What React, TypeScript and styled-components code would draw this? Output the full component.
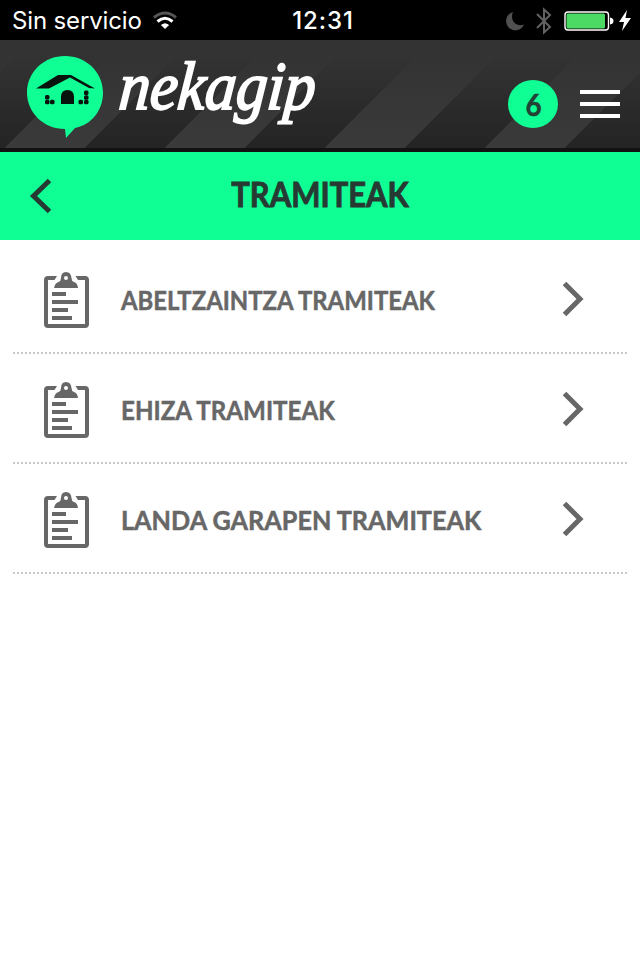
import React from "react";
import styled, { createGlobalStyle } from "styled-components";

const GlobalStyle = createGlobalStyle`
  * { box-sizing: border-box; }
  body { margin: 0; background: #fff; }
`;

const Screen = styled.div`
  width: 640px;
  height: 960px;
  overflow: hidden;
  background: #fff;
  font-family: Lato, "Liberation Sans", sans-serif;
`;

const StatusBar = styled.div`
  display: grid;
  grid-template-columns: 1fr auto 1fr;
  align-items: center;
  height: 40px;
  padding: 1px 9px 0 12px;
  background: #000;
  color: #fff;
  font: 400 24px/39px Inter, "Liberation Sans", sans-serif;
`;

const Carrier = styled.div`
  display: flex;
  align-items: center;
  gap: 10px;
  letter-spacing: -0.15px;
`;

const Clock = styled.div`
  padding-left: 3px;
  font-weight: 500;
  letter-spacing: 0.9px;
`;

const StatusIcons = styled.div`
  display: flex;
  justify-content: flex-end;
  align-items: center;
  gap: 5px;
`;

const Header = styled.header`
  display: flex;
  height: 112px;
  padding-left: 27px;
  border-bottom: 4px solid #121212;
  background:
    linear-gradient(#333 0, #333 14%, rgba(51, 51, 51, 0) 100%),
    repeating-linear-gradient(135deg, #3a3a3a 0 22.6px, #242424 23.1px 79.2px, #3a3a3a 79.7px 113.14px);
`;

const Brand = styled.div`
  display: flex;
  flex: 1;
  padding-top: 16px;
  gap: 15px;
`;

const Wordmark = styled.span`
  font: italic 400 62px/74px "Liberation Serif", serif;
  color: #fff;
  -webkit-text-stroke: 1.8px #fff;
  transform: translateY(-5px) skewX(-5deg) scaleY(1.1);
  transform-origin: 0 55px;
`;

const Badge = styled.div`
  display: flex;
  align-items: center;
  justify-content: center;
  width: 50px;
  height: 48px;
  margin-top: 40px;
  border-radius: 50%;
  background: #0fff95;
  color: #234236;
  font-size: 30px;
  font-weight: 700;
`;

const BadgeCount = styled.span`
  transform: translateX(1px) scaleX(0.93);
  -webkit-text-stroke: 0.5px currentColor;
`;

const MenuButton = styled.div`
  display: flex;
  flex-direction: column;
  gap: 8px;
  width: 40px;
  margin: 50px 20px 0 22px;
`;

const MenuLine = styled.i`
  height: 4px;
  background: #fff;
`;

const TitleBar = styled.div`
  display: grid;
  grid-template-columns: 100px 1fr 100px;
  align-items: center;
  height: 88px;
  background: #0fff95;
  color: #263a33;
`;

const BackIcon = styled.svg`
  margin-left: 29px;
`;

const Title = styled.h1`
  margin: 0;
  text-align: center;
  font-size: 35px;
  font-weight: 700;
  line-height: 83px;
  padding-bottom: 5px;
  transform: scaleX(0.885);
  -webkit-text-stroke: 0.9px currentColor;
`;

const List = styled.ul`
  margin: 0 13px;
  padding: 4px 0 0;
  list-style: none;
`;

const Row = styled.li`
  display: flex;
  align-items: center;
  height: 110px;
  padding: 4px 43px 0 31px;
  border-bottom: 2px dotted #c9c9c9;
  color: #676767;
`;

const Label = styled.span<{ $stretch: number }>`
  flex: 1;
  margin-left: 32px;
  font-size: 27px;
  font-weight: 700;
  line-height: 32px;
  white-space: nowrap;
  -webkit-text-stroke: 0.5px currentColor;
  transform: scaleX(${(p) => p.$stretch});
  transform-origin: 0 50%;
`;

const WifiIcon = () => (
  <svg width="26" height="20" viewBox="0 0 26 20" fill="none" strokeWidth="3">
    <path d="M2 6.500Q13-2.500 24 6.500" stroke="#555" />
    <path d="M5.500 10.500Q13 4 20.500 10.500" stroke="#fff" />
    <path d="M9.500 14Q13 11.500 16.500 14L13 17.500Z" fill="#fff" stroke="#fff" strokeWidth="1" />
  </svg>
);

const MoonIcon = () => (
  <svg width="20" height="20" viewBox="0 0 20 20">
    <path d="M7 1A9.300 9.300 0 1 0 18 13.500C10 16.500 3.500 9 7 1Z" fill="#505050" />
  </svg>
);

const BluetoothIcon = () => (
  <svg width="28" height="28" viewBox="-5 0 28 28" fill="none" stroke="#626262" strokeWidth="2">
    <path d="M1 7L14 20L8 25.500V2.500L14 8L1 21" />
  </svg>
);

const BatteryIcon = () => (
  <svg width="50" height="20" viewBox="0 0 50 20">
    <rect x="1" y="1" width="43.500" height="18" rx="3" stroke="#fff" strokeWidth="1.400" fill="none" />
    <rect x="2.500" y="2.500" width="38.500" height="15" rx="1.500" fill="#4cd964" />
    <path d="M46 6.500Q49.500 7 49.500 10T46 13.500Z" fill="#fff" />
  </svg>
);

const BoltIcon = () => (
  <svg width="12" height="21" viewBox="0 0 12 21">
    <path d="M8 0L0 12H5L3 21L12 8H6.500Z" fill="#fff" />
  </svg>
);

const HouseLogo = () => (
  <svg width="76" height="82" viewBox="0 0 76 82">
    <path d="M38 0C59 0 76 16 76 36.500C76 55 64 69 48 72L39 82L38 73C17 73 0 57 0 36.500C0 16 17 0 38 0Z" fill="#0fff95" />
    <g fill="#07130d">
      <path d="M9 32.500L31 19H44L68 32.500L62 32L43 21.500L22 32.500Z" />
      <path d="M34 48V41Q34 34 40.500 34T47 41V48Z" />
      <rect x="18" y="39" width="4.500" height="4.500" rx="1.500" />
      <rect x="18" y="43.700" width="4.500" height="4.500" rx="1.500" />
      <rect x="23" y="43.700" width="4.500" height="4.500" rx="1.500" />
      <rect x="57" y="34.500" width="4.500" height="4.500" rx="1.500" />
      <rect x="57" y="39.200" width="4.500" height="4.500" rx="1.500" />
      <rect x="57" y="43.700" width="4.500" height="4.500" rx="1.500" />
      <rect x="51.500" y="43.700" width="4.500" height="4.500" rx="1.500" />
    </g>
  </svg>
);

const ClipboardIcon = () => (
  <svg width="45" height="56" viewBox="0 0 45 56" fill="currentColor">
    <path d="M13 4L10.500 8H4V52H41V8H34L31.500 4H41Q45 4 45 8V52Q45 56 41 56H4Q0 56 0 52V8Q0 4 4 4Z" />
    <path
      fillRule="evenodd"
      d="M10 16Q11 11 14.500 10Q17 9 17 6Q17 0 22 0T27.500 6Q27.500 9 30 10Q33.500 11 34 16ZM22 4A2 2 0 1 0 22 8A2 2 0 1 0 22 4Z"
    />
    <path d="M8 20H22V24H8ZM8 28H34V32H8ZM8 36H24V40H8ZM8 44H28V48H8Z" />
  </svg>
);

const Chevron = () => (
  <svg width="22" height="38" viewBox="0 0 22 38" fill="none" stroke="currentColor" strokeWidth="5">
    <path d="M2.500 2.500L18 18L2.500 33.500" />
  </svg>
);

const procedures = [
  { name: "ABELTZAINTZA TRAMITEAK", stretch: 0.885 },
  { name: "EHIZA TRAMITEAK", stretch: 0.894 },
  { name: "LANDA GARAPEN TRAMITEAK", stretch: 0.934 },
];

export default function App() {
  return (
    <>
      <GlobalStyle />
      <Screen>
        <StatusBar>
          <Carrier>
            Sin servicio
            <WifiIcon />
          </Carrier>
          <Clock>12:31</Clock>
          <StatusIcons>
            <MoonIcon />
            <BluetoothIcon />
            <BatteryIcon />
            <BoltIcon />
          </StatusIcons>
        </StatusBar>
        <Header>
          <Brand>
            <HouseLogo />
            <Wordmark>nekagip</Wordmark>
          </Brand>
          <Badge>
            <BadgeCount>6</BadgeCount>
          </Badge>
          <MenuButton>
            <MenuLine />
            <MenuLine />
            <MenuLine />
          </MenuButton>
        </Header>
        <TitleBar>
          <BackIcon width="23" height="36" viewBox="0 0 23 36" fill="none" stroke="currentColor" strokeWidth="5">
            <path d="M20.500 2.500L4.500 18L20.500 33.500" />
          </BackIcon>
          <Title>TRAMITEAK</Title>
        </TitleBar>
        <List>
          {procedures.map((p) => (
            <Row key={p.name}>
              <ClipboardIcon />
              <Label $stretch={p.stretch}>{p.name}</Label>
              <Chevron />
            </Row>
          ))}
        </List>
      </Screen>
    </>
  );
}
